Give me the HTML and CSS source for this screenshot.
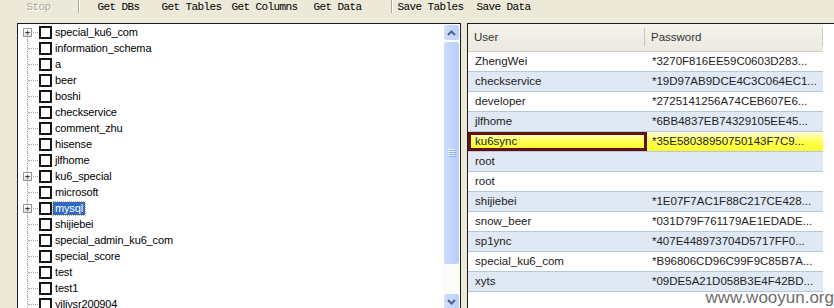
FILE: index.html
```html
<!DOCTYPE html>
<html lang="en">
<head>
    <meta charset="UTF-8">
    <title>DB Browser</title>
    <link rel="stylesheet" href="styles.css">
</head>
<body>
    <div class="toolbar">
        <span class="tool off">Stop</span>
        <span class="sep sep-a"></span>
        <span class="tool">Get DBs</span>
        <span class="tool">Get Tables</span>
        <span class="tool">Get Columns</span>
        <span class="tool">Get Data</span>
        <span class="sep sep-b"></span>
        <span class="tool">Save Tables</span>
        <span class="tool">Save Data</span>
    </div>

    <div class="work">
        <div class="tree">
            <ul class="nodes">
                <li class="node first"><span class="twig"><i class="plus">+</i></span><span class="check"></span><span class="label">special_ku6_com</span></li>
                <li class="node"><span class="twig"></span><span class="check"></span><span class="label">information_schema</span></li>
                <li class="node"><span class="twig"></span><span class="check"></span><span class="label">a</span></li>
                <li class="node"><span class="twig"></span><span class="check"></span><span class="label">beer</span></li>
                <li class="node"><span class="twig"></span><span class="check"></span><span class="label">boshi</span></li>
                <li class="node"><span class="twig"></span><span class="check"></span><span class="label">checkservice</span></li>
                <li class="node"><span class="twig"></span><span class="check"></span><span class="label">comment_zhu</span></li>
                <li class="node"><span class="twig"></span><span class="check"></span><span class="label">hisense</span></li>
                <li class="node"><span class="twig"></span><span class="check"></span><span class="label">jlfhome</span></li>
                <li class="node"><span class="twig"><i class="plus">+</i></span><span class="check"></span><span class="label">ku6_special</span></li>
                <li class="node"><span class="twig"></span><span class="check"></span><span class="label">microsoft</span></li>
                <li class="node"><span class="twig"><i class="plus">+</i></span><span class="check"></span><span class="label selected">mysql</span></li>
                <li class="node"><span class="twig"></span><span class="check"></span><span class="label">shijiebei</span></li>
                <li class="node"><span class="twig"></span><span class="check"></span><span class="label">special_admin_ku6_com</span></li>
                <li class="node"><span class="twig"></span><span class="check"></span><span class="label">special_score</span></li>
                <li class="node"><span class="twig"></span><span class="check"></span><span class="label">test</span></li>
                <li class="node"><span class="twig"></span><span class="check"></span><span class="label">test1</span></li>
                <li class="node"><span class="twig"></span><span class="check"></span><span class="label">yiliysr200904</span></li>
            </ul>
            <div class="vscroll">
                <div class="sbtn">
                    <svg width="9" height="6" viewBox="0 0 9 6"><path d="M1 5 L4.5 1.5 L8 5" fill="none" stroke="#4d6185" stroke-width="2"/></svg>
                </div>
                <div class="thumb">
                    <svg width="8" height="8" viewBox="0 0 8 8"><path d="M0 0.5H7M0 2.5H7M0 4.5H7M0 6.5H7" stroke="#eef3fe" stroke-width="1"/><path d="M1 1.5H8M1 3.5H8M1 5.5H8M1 7.5H8" stroke="#8cb0f8" stroke-width="1"/></svg>
                </div>
                <div class="track"></div>
                <div class="sbtn">
                    <svg width="9" height="6" viewBox="0 0 9 6"><path d="M1 1 L4.5 4.5 L8 1" fill="none" stroke="#4d6185" stroke-width="2"/></svg>
                </div>
            </div>
        </div>

        <div class="list">
            <div class="head">
                <span class="hcell">User</span>
                <span class="hcell">Password</span>
            </div>
            <div class="row"><span class="cell">ZhengWei</span><span class="cell">*3270F816EE59C0603D283...</span></div>
            <div class="row alt"><span class="cell">checkservice</span><span class="cell">*19D97AB9DCE4C3C064EC1...</span></div>
            <div class="row"><span class="cell">developer</span><span class="cell">*2725141256A74CEB607E6...</span></div>
            <div class="row alt"><span class="cell">jlfhome</span><span class="cell">*6BB4837EB74329105EE45...</span></div>
            <div class="row pick"><span class="cell editing">ku6sync</span><span class="cell">*35E58038950750143F7C9...</span></div>
            <div class="row alt"><span class="cell">root</span><span class="cell"></span></div>
            <div class="row"><span class="cell">root</span><span class="cell"></span></div>
            <div class="row alt"><span class="cell">shijiebei</span><span class="cell">*1E07F7AC1F88C217CE428...</span></div>
            <div class="row"><span class="cell">snow_beer</span><span class="cell">*031D79F761179AE1EDADE...</span></div>
            <div class="row alt"><span class="cell">sp1ync</span><span class="cell">*407E448973704D5717FF0...</span></div>
            <div class="row"><span class="cell">special_ku6_com</span><span class="cell">*B96806CD96C99F9C85B7A...</span></div>
            <div class="row alt"><span class="cell">xyts</span><span class="cell">*09DE5A21D058B3E4F42BD...</span></div>
        </div>
    </div>

    <div class="mark">www.wooyun.org</div>
</body>
</html>
```

FILE: styles.css
```css
body { margin: 0; height: 308px; overflow: hidden; background-color: #ece9d8; font-family: "Liberation Sans", Arial, sans-serif; position: relative; }

.toolbar { display: flex; height: 14px; padding-left: 2px; font-family: "Liberation Mono", monospace; font-size: 11px; letter-spacing: -0.6px; line-height: 14px; }
.tool { width: 73px; text-align: center; color: #000; white-space: nowrap; }
.tool.off { color: #aca899; text-shadow: 1px 1px 0 #fff; }
.sep { width: 1px; height: 13px; background-color: #aca899; border-right: 1px solid #fff; }
.sep-a { margin: 0 2px 0 3px; }
.sep-b { margin: 0 1px 0 17px; }

.work { display: flex; gap: 6px; margin-top: 9px; padding-left: 17px; }

.tree { display: flex; width: 442px; height: 286px; border: 1px solid #1c1c1c; background-color: #fff; flex-shrink: 0; }
.nodes { flex: 1; list-style: none; margin: 0; padding: 0; font-size: 11px; letter-spacing: -0.15px; }
.node { display: flex; align-items: center; height: 16px; }
.twig { position: relative; width: 21px; height: 16px; flex-shrink: 0; }
.twig::before { content: ""; position: absolute; left: 9px; top: 0; bottom: 0; border-left: 1px dotted #a0a0a0; }
.node.first .twig::before { top: 8px; }
.twig::after { content: ""; position: absolute; left: 10px; top: 8px; width: 10px; border-top: 1px dotted #a0a0a0; }
.plus { position: absolute; left: 5px; top: 4px; z-index: 1; width: 9px; height: 9px; box-sizing: border-box; border: 1px solid #919b9c; background: linear-gradient(#fff, #e3e0d6); font-style: normal; font-family: "DejaVu Sans Mono", monospace; font-size: 9px; line-height: 7px; text-align: center; color: #222; }
.check { width: 13px; height: 13px; box-sizing: border-box; border: 2px solid #161616; background-color: #fff; flex-shrink: 0; }
.label { margin-left: 1px; padding: 0 2px; line-height: 13px; color: #000; white-space: nowrap; }
.label.selected { background-color: #316ac5; color: #fff; outline: 1px dotted #c9b36b; }

.vscroll { display: flex; flex-direction: column; width: 17px; background-color: #fbfbf7; }
.sbtn { display: flex; align-items: center; justify-content: center; height: 17px; box-sizing: border-box; border: 1px solid #fff; border-radius: 3px; background: linear-gradient(90deg, #d2defc, #bccffa); }
.thumb { display: flex; align-items: center; justify-content: center; height: 224px; box-sizing: border-box; border: 1px solid #fff; border-radius: 3px; background: linear-gradient(90deg, #cddbfd, #b9cdf9); }
.track { flex: 1; }

.list { flex: 1; height: 300px; border-left: 1px solid #1c1c1c; border-top: 1px solid #1c1c1c; background-color: #fff; font-size: 11.5px; color: #222; }
.head { display: grid; grid-template-columns: 177px 178px; height: 28px; }
.hcell { position: relative; padding-left: 6px; line-height: 27px; color: #333; background: linear-gradient(#f3f2ec, #ebe9e0); border-bottom: 1px solid #d3cfc0; }
.hcell::after { content: ""; position: absolute; right: 0; top: 4px; bottom: 5px; width: 1px; background-color: #cbc7b8; }
.row { display: grid; grid-template-columns: 177px 178px; width: 355px; height: 20px; box-sizing: border-box; border-bottom: 1px solid #b4c8e0; }
.row.alt { background-color: #e0e9f3; }
.row.pick { background: linear-gradient(#ffffd6, #ffff4a 55%, #ffff30); }
.cell { padding-left: 7px; line-height: 19px; white-space: nowrap; overflow: hidden; }
.cell.editing { box-shadow: inset 0 0 0 3px #621010; margin-right: -2px; }

.mark { position: absolute; right: 0; bottom: 2px; font-size: 17px; line-height: 17px; color: #6e6e6e; text-shadow: 0 0 2px #fff; }
```
